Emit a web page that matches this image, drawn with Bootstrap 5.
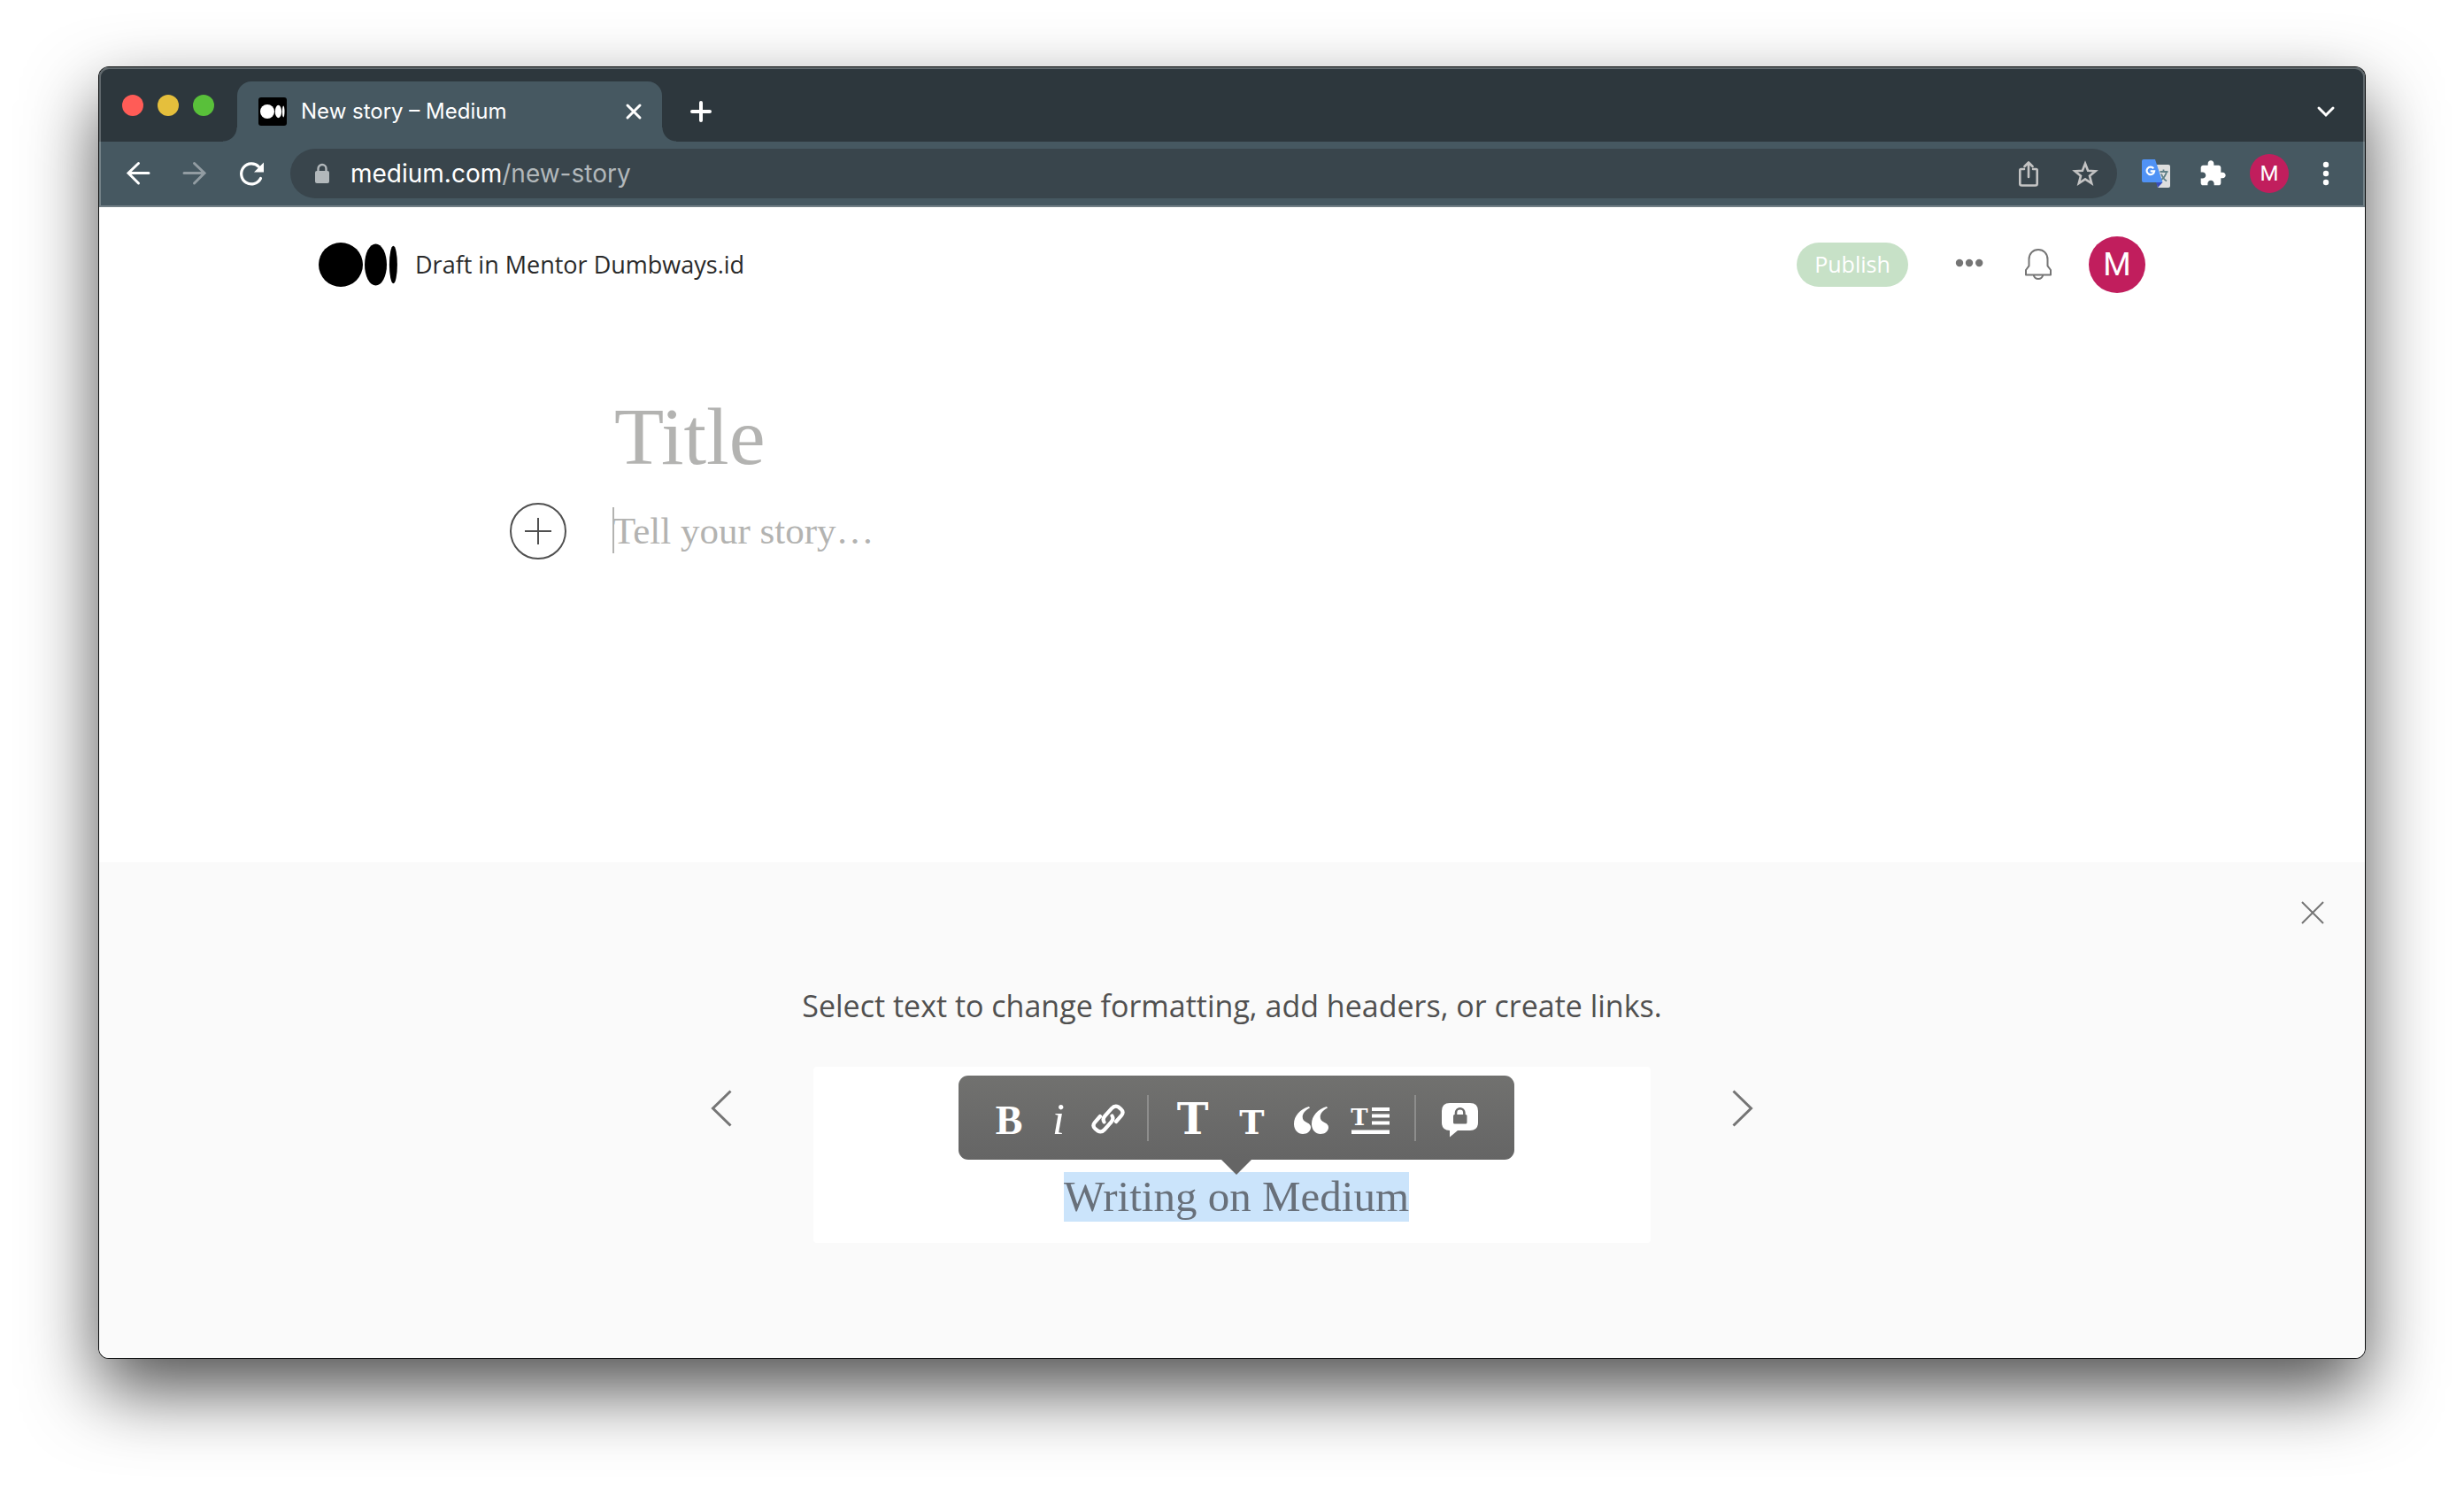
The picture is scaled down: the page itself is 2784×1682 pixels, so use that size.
<!DOCTYPE html>
<html lang="en">
<head>
<meta charset="utf-8">
<meta name="viewport" content="width=device-width, initial-scale=1">
<title>New story – Medium</title>
<link href="https://cdn.jsdelivr.net/npm/bootstrap@5.3.0/dist/css/bootstrap.min.css" rel="stylesheet">
<style>
  body { background: #fff; padding: 76px 112px 148px; font-family: "Open Sans", sans-serif; }
  svg { display: block; flex: none; }
  button { background: none; border: 0; padding: 0; color: inherit; }
  .ui-font { font-family: Inter, sans-serif; }
  .serif-font { font-family: "Liberation Serif", serif; }

  .browser { border-radius: 11px; background: #fff; box-shadow: 0 0 0 1px #0b0d0e, 0 36px 82px rgba(0,0,0,.69); }

  /* tab strip and address bar */
  .chrome { color: #fff; background: #465861; border-radius: 11px 11px 0 0; border-bottom: 2px solid #727f86; }
  .chrome::after { content: ""; position: absolute; inset: 0; border: 2px solid rgba(255,255,255,.25); border-bottom: 0; border-radius: inherit; pointer-events: none; }
  .strip { background: #2d373d; height: 84px; padding: 16px 32px 0 26px; border-radius: 11px 11px 0 0; }
  .lights { gap: 16px; margin: 15px 26px 0 0; }
  .light { width: 24px; height: 24px; border-radius: 50%; }
  .light-close { background: #ff5c57; }
  .light-min { background: #e5bf3c; }
  .light-zoom { background: #59c03a; }
  .tab-item { width: 480px; height: 68px; padding: 0 20px 0 24px; gap: 16px; background: #465861; border-radius: 16px 16px 0 0; font-size: 24px; }
  .tab-item::before, .tab-item::after { content: ""; position: absolute; bottom: 0; width: 16px; height: 16px; }
  .tab-item::before { right: 100%; background: radial-gradient(circle at 0 0, transparent 15px, #465861 16px); }
  .tab-item::after { left: 100%; background: radial-gradient(circle at 100% 0, transparent 15px, #465861 16px); }
  .new-tab { margin-left: 32px; }
  .toolbar-row { height: 72px; padding: 0 28px; }
  .nav-icons { gap: 32px; margin-right: 28px; }
  .omnibox { height: 56px; border-radius: 28px; background: #39454c; padding: 0 20px 0 24px; font-size: 28px; color: #b2b8bb; }
  .omnibox-text { margin-left: 20px; }
  .omnibox-actions { gap: 32px; color: #c3c3c3; }
  .ext-icons { gap: 26px; margin-left: 28px; }
  .translate { margin-right: 6px; }
  .face { background: #c11e5d; color: #fff; border-radius: 50%; font-family: Roboto, sans-serif; }
  .face-sm { width: 44px; height: 44px; font-size: 24px; }
  .face-lg { width: 64px; height: 64px; font-size: 36px; }

  /* Medium header */
  .page-head { max-width: 2064px; height: 130px; font-size: 27px; color: #292929; }
  .head-left { gap: 20px; }
  .publish { width: 126px; height: 50px; border-radius: 25px; background: #c7e1c7; color: #fff; font-size: 25px; margin-right: 53px; }
  .head-icons { gap: 41px; color: #757575; }
  .more { margin-right: 5px; }

  /* editor */
  .editor { max-width: 1632px; min-height: 610px; padding-top: 77px; }
  .editor input { border: 0; outline: 0; background: none; color: #292929; width: 100%; }
  .editor input::placeholder { color: #b3b3b1; opacity: 1; }
  .title-line { padding-left: 118px; }
  .title-line input { font-size: 92px; line-height: 104px; height: 104px; padding: 0; display: block; }
  .story-line { gap: 52px; margin-top: 23px; }
  .story-line input { font-size: 43px; line-height: 48px; height: 48px; padding: 0; display: block; }
  .caret { position: absolute; left: 0; top: -3px; width: 2px; height: 52px; background: #b3b3b1; }

  /* tips panel */
  .tips { background: #fafafa; padding: 138px 0 130px; border-radius: 0 0 11px 11px; color: #757575; }
  .tips-close { position: absolute; top: 44px; right: 46px; }
  .tips-text { font-size: 34px; line-height: 48px; color: #505050; margin-bottom: 45px; }
  .slides { gap: 92px; }
  .slide-nav { margin-top: 26px; }
  .demo { width: 946px; height: 199px; border-radius: 4px; background: #fff; padding: 10px 0 0 10px; gap: 14px; }
  .format-bar { width: 628px; height: 95px; padding: 18px 0 0 29px; border-radius: 11px; color: #fff; background: linear-gradient(#71716f, #656565); align-items: baseline; }
  .format-bar::after { content: ""; position: absolute; top: 100%; left: 50%; margin-left: -17px; border: 17px solid transparent; border-top-color: #656565; border-bottom: 0; z-index: 1; }
  .format-bar button { width: 67px; line-height: 62px; text-align: center; }
  .format-bar .slim { width: 56px; }
  .format-bar svg { display: inline-block; vertical-align: baseline; overflow: visible; }
  .fs-b { font-size: 46px; font-weight: 700; }
  .fs-i { font-size: 50px; font-style: italic; }
  .slab { font-family: "DejaVu Serif", serif; font-weight: 700; }
  .fs-t { font-size: 48px; }
  .fs-s { font-size: 38px; }
  .bar-rule { width: 2px; height: 52px; margin: 4px 16px 0; background: #8d8d8c; align-self: flex-start; }
  .picked { font-size: 49px; line-height: 56px; background: #cbe4fb; color: #68707a; }
</style>
</head>
<body>
<div class="browser">
  <header class="chrome ui-font position-relative">
    <div class="strip d-flex align-items-center">
      <div class="lights d-flex align-self-start">
        <button class="light light-close" aria-label="Close window"></button>
        <button class="light light-min" aria-label="Minimise window"></button>
        <button class="light light-zoom" aria-label="Zoom window"></button>
      </div>
      <div class="tab-item d-flex align-items-center position-relative">
        <svg width="32" height="32" viewBox="0 0 32 32"><rect width="32" height="32" rx="3"/><g fill="#fff"><circle cx="10" cy="16" r="8"/><ellipse cx="22.500" cy="16" rx="3.700" ry="7.200"/><ellipse cx="28.200" cy="16" rx="1.300" ry="6.500"/></g></svg>
        <span class="text-nowrap">New story – Medium</span>
        <button class="ms-auto" aria-label="Close tab"><svg width="24" height="24" viewBox="0 0 24 24" stroke="#fff" stroke-width="3" stroke-linecap="round"><path d="M5 5l14 14M19 5L5 19"/></svg></button>
      </div>
      <button class="new-tab" aria-label="New tab"><svg width="24" height="24" viewBox="0 0 24 24" stroke="#fff" stroke-width="4" stroke-linecap="round"><path d="M12 2v20M2 12h20"/></svg></button>
      <button class="ms-auto" aria-label="Search tabs"><svg width="24" height="24" viewBox="0 0 24 24" fill="none" stroke="#fff" stroke-width="3" stroke-linecap="round"><path d="M4 8l8 8 8-8"/></svg></button>
    </div>
    <div class="toolbar-row d-flex align-items-center">
      <div class="nav-icons d-flex">
        <button aria-label="Back"><svg width="32" height="32" viewBox="0 0 32 32" fill="none" stroke="#fff" stroke-width="3" stroke-linecap="round"><path d="M28 15.500H5M16.500 4.500L5 15.500l11.500 11.500"/></svg></button>
        <button aria-label="Forward"><svg width="32" height="32" viewBox="0 0 32 32" fill="none" stroke="#929ca2" stroke-width="3" stroke-linecap="round"><path d="M4 15.500h23M15.500 4.500L27 15.500 15.500 27"/></svg></button>
        <button aria-label="Reload"><svg width="32" height="32" viewBox="0 0 32 32" fill="none"><path d="M26.500 21.500A11.500 11.500 0 1 1 24.500 8.500" stroke="#fff" stroke-width="3.200" stroke-linecap="round"/><path d="M30 3.500v11H19z" fill="#fff"/></svg></button>
      </div>
      <div class="omnibox d-flex align-items-center flex-grow-1">
        <svg width="24" height="24" viewBox="0 0 24 24"><rect x="4" y="9" width="16" height="14" rx="2" fill="#b2b8bb"/><path d="M7.500 10V6.500a4.500 4.500 0 0 1 9 0V10" fill="none" stroke="#b2b8bb" stroke-width="2.400"/></svg>
        <div class="omnibox-text"><span class="text-white">medium.com</span>/new-story</div>
        <div class="omnibox-actions d-flex ms-auto">
          <button aria-label="Share"><svg width="32" height="32" viewBox="0 0 32 32" fill="none" stroke="currentColor" stroke-width="2.600" stroke-linecap="round" stroke-linejoin="round"><path d="M11 11H7.500Q6.300 11 6.300 12.500v15q0 2 2 2h15.400q2 0 2-2v-15q0-1.500-1.200-1.500H21M16 20V3.500M11.500 8L16 3.500 20.500 8"/></svg></button>
          <button aria-label="Bookmark"><svg width="32" height="32" viewBox="0 0 32 32" fill="none" stroke="currentColor" stroke-width="2.600"><path d="M16 4.800l3.100 8 8.400.5-6.500 5.400 2.200 8.400-7.200-4.700-7.200 4.700 2.200-8.400-6.500-5.400 8.400-.5z"/></svg></button>
        </div>
      </div>
      <div class="ext-icons d-flex align-items-center">
        <button class="translate" aria-label="Translate"><svg width="32" height="32" viewBox="0 0 32 32"><path d="M13 6h17q2 0 2 2v22q0 2-2 2H18z" fill="#dedede"/><path d="M16 26h7.500L18 32z" fill="#3a4db8"/><path d="M20.500 14H29.500M24.500 11.500V14M28 14q-1.500 6-6.500 9.500M22 16.500q2 5.500 6 8" fill="none" stroke="#5f8088" stroke-width="1.800"/><path d="M2 0h13l8.500 26H2q-2 0-2-2V2q0-2 2-2z" fill="#5092f5"/><path d="M13.200 10.200a4.300 4.300 0 1 0 .9 3.200H9.700" fill="none" stroke="#fff" stroke-width="2.200"/></svg></button>
        <button aria-label="Extensions"><svg width="32" height="32" viewBox="0 0 24 24" fill="#fff"><path d="M20.500 11H19V7c0-1.100-.9-2-2-2h-4V3.500C13 2.120 11.880 1 10.500 1S8 2.120 8 3.500V5H4c-1.100 0-1.990.9-1.990 2v3.800H3.500c1.490 0 2.700 1.210 2.700 2.700s-1.210 2.700-2.700 2.700H2V20c0 1.100.9 2 2 2h3.800v-1.500c0-1.490 1.210-2.700 2.700-2.700 1.490 0 2.700 1.210 2.700 2.700V22H17c1.100 0 2-.9 2-2v-4h1.500c1.380 0 2.500-1.120 2.500-2.500S21.880 11 20.500 11z"/></svg></button>
        <button class="face face-sm d-flex align-items-center justify-content-center" aria-label="Profile">M</button>
        <button aria-label="Menu"><svg width="32" height="32" viewBox="0 0 32 32" fill="#fff"><circle cx="16" cy="6" r="3.200"/><circle cx="16" cy="16" r="3.200"/><circle cx="16" cy="26" r="3.200"/></svg></button>
      </div>
    </div>
  </header>

  <main>
    <div class="page-head mx-auto d-flex align-items-center justify-content-between">
      <div class="head-left d-flex align-items-center">
        <a href="#" aria-label="Medium"><svg width="89" height="50" viewBox="0 0 89 50"><circle cx="25" cy="25" r="25"/><ellipse cx="64.500" cy="25" rx="12.500" ry="23.600"/><ellipse cx="84.400" cy="25" rx="4.500" ry="21.200"/></svg></a>
        <span>Draft in Mentor Dumbways.id</span>
      </div>
      <div class="d-flex align-items-center">
        <button class="publish">Publish</button>
        <div class="head-icons d-flex align-items-center">
          <button class="more" aria-label="More"><svg width="32" height="36" viewBox="0 0 32 36" fill="#757575"><circle cx="5" cy="16" r="4.200"/><circle cx="16" cy="16" r="4.200"/><circle cx="27.200" cy="16" r="4.200"/></svg></button>
          <button aria-label="Notifications"><svg width="32" height="36" viewBox="0 0 32 36" fill="none" stroke="#757575" stroke-width="2" stroke-linejoin="round"><path d="M16 1c-6.200 0-10.500 4.700-10.500 11v7.300L2 24v5.500h28V24l-3.500-4.700V12C26.500 5.700 22.200 1 16 1zM10.800 30c.7 2.600 2.700 4 5.200 4s4.500-1.400 5.200-4"/></svg></button>
          <button class="face face-lg d-flex align-items-center justify-content-center" aria-label="Account">M</button>
        </div>
      </div>
    </div>

    <div class="editor serif-font mx-auto">
      <div class="title-line"><input type="text" placeholder="Title" aria-label="Title"></div>
      <div class="story-line d-flex align-items-center">
        <button aria-label="Add an image, video or embed"><svg width="64" height="64" viewBox="0 0 64 64" fill="none" stroke="#505050" stroke-width="2"><circle cx="32" cy="32" r="31"/><path d="M32 17v30M17 32h30"/></svg></button>
        <div class="position-relative flex-grow-1"><span class="caret"></span><input type="text" placeholder="Tell your story…" aria-label="Tell your story"></div>
      </div>
    </div>
  </main>

  <section class="tips position-relative">
    <button class="tips-close" aria-label="Close tips"><svg width="26" height="26" viewBox="0 0 26 26" stroke="#757575" stroke-width="2"><path d="M1 1l24 24M25 1L1 25"/></svg></button>
    <p class="tips-text text-center">Select text to change formatting, add headers, or create links.</p>
    <div class="slides d-flex justify-content-center align-items-start">
      <button class="slide-nav" aria-label="Previous tip"><svg width="24" height="42" viewBox="0 0 24 42" fill="none" stroke="#757575" stroke-width="3"><path d="M22.500 1.500L2.500 21l20 19.500"/></svg></button>
      <div class="demo serif-font d-flex flex-column align-items-center">
        <div class="format-bar d-flex position-relative">
          <button class="slim fs-b">B</button>
          <button class="slim fs-i" aria-label="Italic">i</button>
          <button class="slim" aria-label="Link"><svg width="38" height="34" viewBox="0 0 38 34" fill="none" stroke="#fff" stroke-width="4.200" stroke-linecap="round"><path d="M14.500 20.500Q12.300 17 15.500 13.500L23 5.200Q26.500 1.200 30.500 3.300L33.500 5.800Q37.300 9.300 34 13.200L28 20M23.500 13.500Q25.700 17 22.500 20.500L15 29Q11.500 32.800 7.700 30.700L4.500 28.200Q.7 24.700 4 20.800L10 14"/></svg></button>
          <span class="bar-rule"></span>
          <button class="slab fs-t">T</button>
          <button class="slab fs-s">T</button>
          <button aria-label="Quote"><svg width="39" height="31" viewBox="0 0 39 31" fill="#fff"><path id="q" d="M17 0C7 3 0 10.500 0 19.500 0 26.500 4.500 31 10 31c5 0 8.500-2.800 9-7 .2-3-2-5-4.500-6-3.200-1.300-4.800-3.200-4.800-6.200C9.700 8 12.500 4.200 18 1.500z"/><use href="#q" x="20"/></svg></button>
          <button aria-label="Drop cap"><svg width="43" height="30" viewBox="0 0 43 30" fill="#fff"><text class="slab" x="9" y="20" text-anchor="middle" font-size="26">T</text><path d="M23 0h20v4H23zM23 7.500h20v4H23zM23 15.500h20v4H23zM0 25.500h43V30H0z"/></svg></button>
          <span class="bar-rule"></span>
          <button aria-label="Private note"><svg width="41" height="35" viewBox="0 0 41 35"><path d="M9 0h23q9 0 9 9v13q0 9-9 9H18l-9 7.500V31q-9 0-9-9V9Q0 0 9 0z" fill="#fff"/><rect x="13" y="13" width="15.500" height="10.500" rx="1.500" fill="#6b6b6a"/><path d="M16 14v-3a4.700 4.700 0 0 1 9.400 0v3" fill="none" stroke="#6b6b6a" stroke-width="2.600"/></svg></button>
        </div>
        <span class="picked">Writing on Medium</span>
      </div>
      <button class="slide-nav" aria-label="Next tip"><svg width="24" height="42" viewBox="0 0 24 42" fill="none" stroke="#757575" stroke-width="3"><path d="M1.500 1.500l20 19.500-20 19.500"/></svg></button>
    </div>
  </section>
</div>
<script src="https://cdn.jsdelivr.net/npm/bootstrap@5.3.0/dist/js/bootstrap.bundle.min.js"></script>
</body>
</html>
